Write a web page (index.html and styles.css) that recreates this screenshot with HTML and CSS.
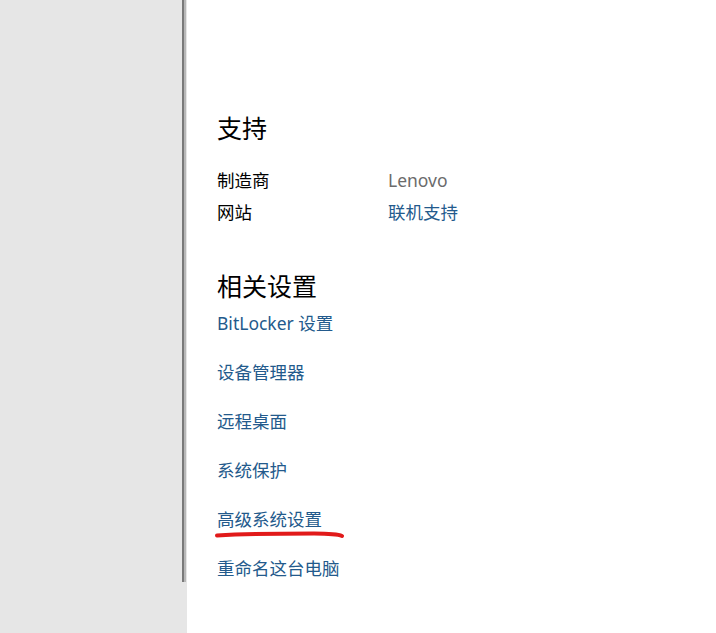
FILE: index.html
```html
<!DOCTYPE html>
<html lang="zh-CN">
<head>
<meta charset="utf-8">
<link rel="stylesheet" href="styles.css">
</head>
<body>
<div class="app">
  <aside class="sidebar">
    <div class="scrollbar"></div>
  </aside>
  <main class="content">
    <h2 class="heading">支持</h2>
    <div class="rows">
      <div class="row"><span class="label">制造商</span><span class="value">Lenovo</span></div>
      <div class="row"><span class="label">网站</span><a class="link">联机支持</a></div>
    </div>
    <h2 class="heading heading-related">相关设置</h2>
    <ul class="links">
      <li><a class="link">BitLocker 设置</a></li>
      <li><a class="link">设备管理器</a></li>
      <li><a class="link">远程桌面</a></li>
      <li><a class="link">系统保护</a></li>
      <li class="marked"><a class="link">高级系统设置</a>
        <svg class="mark" width="132" height="12" viewBox="0 0 132 12"><path d="M3 6.5 C 30 5, 70 4.5, 100 4.5 C 115 4.6, 124 5.2, 128 7" fill="none" stroke="#e11a1a" stroke-width="4" stroke-linecap="round"/></svg>
      </li>
      <li><a class="link">重命名这台电脑</a></li>
    </ul>
  </main>
</div>
</body>
</html>
```
FILE: styles.css
```css
html, body {
  margin: 0;
  padding: 0;
  height: 100%;
}
body {
  font-family: "Segoe UI", "Noto Sans", "Noto Sans CJK SC", sans-serif;
  background: #ffffff;
}
.app {
  display: flex;
  height: 633px;
  overflow: hidden;
}
.sidebar {
  width: 187px;
  flex: none;
  background: #e6e6e6;
  display: flex;
  justify-content: flex-end;
  align-items: flex-start;
}
.scrollbar {
  width: 2px;
  height: 582px;
  background: #7a7a7a;
  border-right: 2px solid #b8b8b8;
  margin-right: 1px;
}
.content {
  flex: 1;
  padding: 111px 0 0 30px;
  color: #000;
}
.heading {
  margin: 0;
  font-size: 25px;
  line-height: 32px;
  font-weight: normal;
  font-family: "Noto Sans CJK SC", sans-serif;
}
.heading-related {
  margin-top: 41px;
}
.rows {
  margin-top: 21px;
  display: flex;
  flex-direction: column;
}
.row {
  display: flex;
  font-size: 17.5px;
  line-height: 32px;
}
.label {
  width: 171px;
  flex: none;
}
.value {
  color: #6b6b6b;
}
.link {
  color: #235a8c;
  text-decoration: none;
}
.links {
  list-style: none;
  margin: 6px 0 0;
  padding: 0;
  display: flex;
  flex-direction: column;
  gap: 17px;
}
.links li {
  font-size: 17.5px;
  line-height: 32px;
}
.marked {
  position: relative;
}
.mark {
  position: absolute;
  left: -3px;
  top: 26px;
}
```
